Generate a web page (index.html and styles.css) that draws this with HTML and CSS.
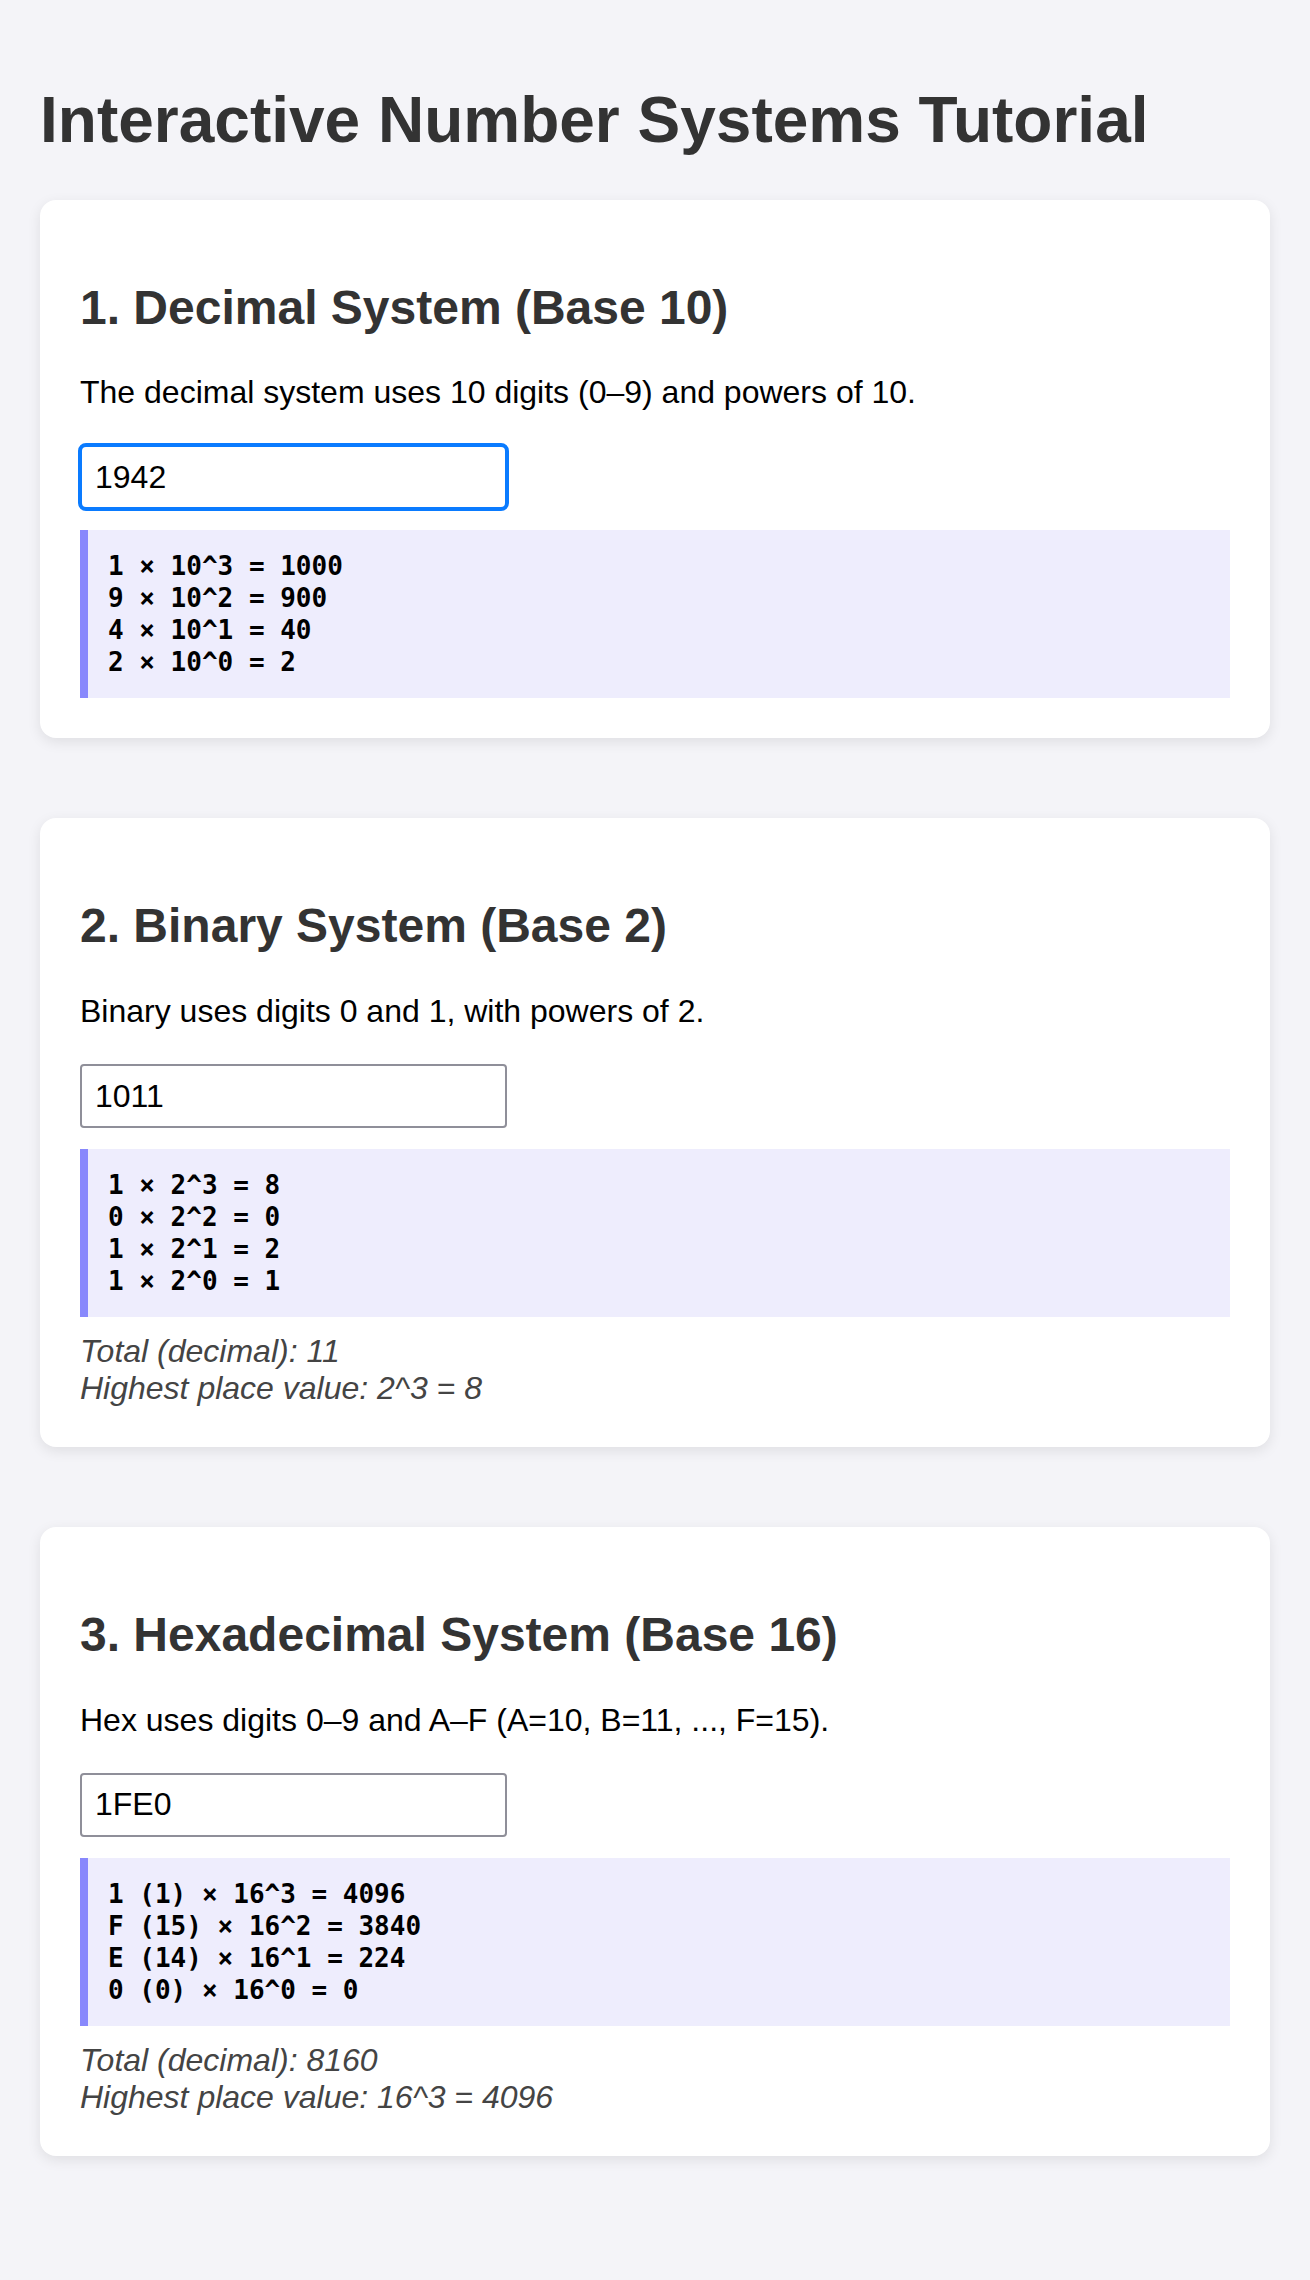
FILE: index.html
```html
<!DOCTYPE html>
<html lang="en">
<head>
<meta charset="utf-8">
<title>Interactive Number Systems Tutorial</title>
<link rel="stylesheet" href="styles.css">
</head>
<body>
<h1 class="page-title">Interactive Number Systems Tutorial</h1>

<section class="card">
  <h2 class="card-title">1. Decimal System (Base 10)</h2>
  <p class="card-text">The decimal system uses 10 digits (0–9) and powers of 10.</p>
  <input class="num-input is-focused" type="text" value="1942">
  <pre class="breakdown">1 × 10^3 = 1000
9 × 10^2 = 900
4 × 10^1 = 40
2 × 10^0 = 2</pre>
</section>

<section class="card">
  <h2 class="card-title">2. Binary System (Base 2)</h2>
  <p class="card-text">Binary uses digits 0 and 1, with powers of 2.</p>
  <input class="num-input" type="text" value="1011">
  <pre class="breakdown">1 × 2^3 = 8
0 × 2^2 = 0
1 × 2^1 = 2
1 × 2^0 = 1</pre>
  <div class="summary">Total (decimal): 11<br>Highest place value: 2^3 = 8</div>
</section>

<section class="card">
  <h2 class="card-title">3. Hexadecimal System (Base 16)</h2>
  <p class="card-text">Hex uses digits 0–9 and A–F (A=10, B=11, ..., F=15).</p>
  <input class="num-input" type="text" value="1FE0">
  <pre class="breakdown">1 (1) × 16^3 = 4096
F (15) × 16^2 = 3840
E (14) × 16^1 = 224
0 (0) × 16^0 = 0</pre>
  <div class="summary">Total (decimal): 8160<br>Highest place value: 16^3 = 4096</div>
</section>
</body>
</html>
```

FILE: styles.css
```css
html, body {
  margin: 0;
}

body {
  padding: 40px;
  background: #f4f4f8;
  font-family: "Liberation Sans", Arial, Helvetica, sans-serif;
  font-size: 32px;
  color: #000;
}

.page-title {
  margin: 0.67em 0;
  font-size: 64px;
  font-weight: bold;
  color: #333;
}

.card {
  background: #fff;
  border-radius: 16px;
  padding: 40px;
  margin-bottom: 80px;
  box-shadow: 0 4px 14px rgba(0, 0, 0, 0.09);
}

.card-title {
  margin: 0.83em 0;
  font-size: 48px;
  font-weight: bold;
  color: #333;
}

.card-text {
  margin: 32px 0;
}

.num-input {
  display: block;
  box-sizing: border-box;
  width: 427px;
  height: 64px;
  margin: 34px 0 21px;
  padding: 0 13px;
  border: 2px solid #8f8f99;
  border-radius: 4px;
  background: #fff;
  font-family: "Liberation Sans", Arial, sans-serif;
  font-size: 32px;
  color: #000;
}

.num-input.is-focused {
  border-color: #0a7bff;
  outline: 3px solid #0a7bff;
  outline-offset: -1px;
  border-radius: 6px;
}

.breakdown {
  margin: 0;
  padding: 20px;
  border-left: 8px solid #8888fc;
  background: #eeedfd;
  font-family: "DejaVu Sans Mono", "Liberation Mono", monospace;
  font-size: 26px;
  font-weight: bold;
  line-height: 32px;
  color: #000;
}

.summary {
  margin-top: 16px;
  font-style: italic;
  color: #444;
}
```
